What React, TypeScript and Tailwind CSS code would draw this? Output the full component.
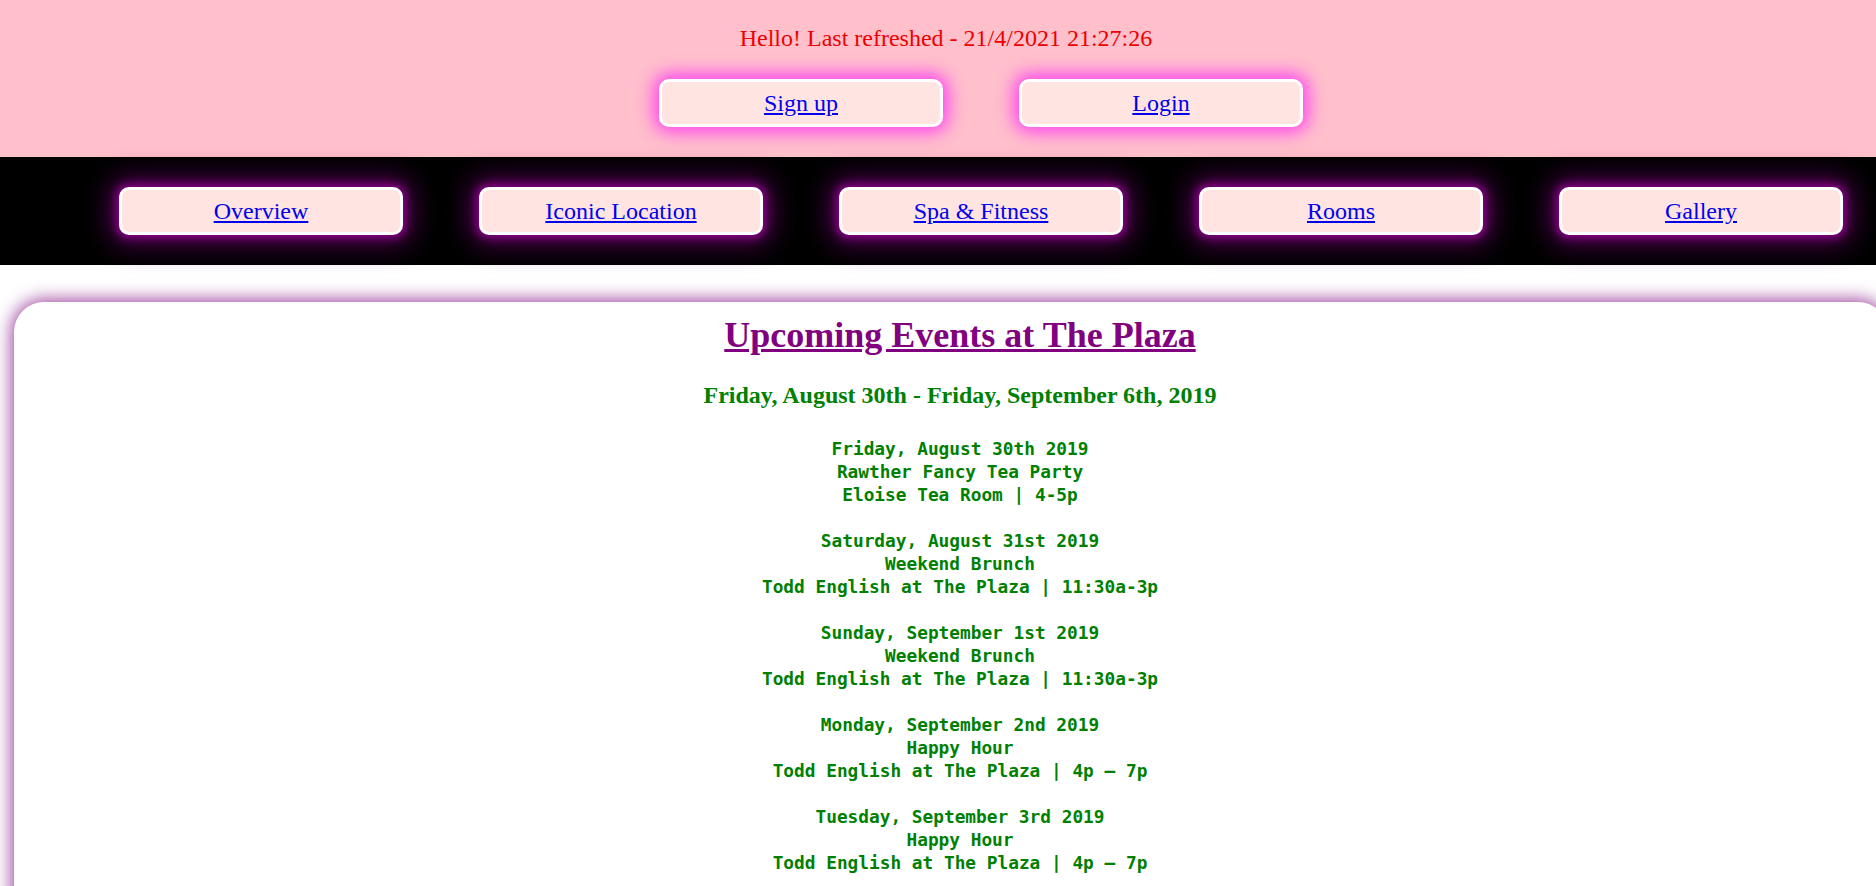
const events = [
  ["Friday, August 30th 2019", "Rawther Fancy Tea Party", "Eloise Tea Room | 4-5p"],
  ["Saturday, August 31st 2019", "Weekend Brunch", "Todd English at The Plaza | 11:30a-3p"],
  ["Sunday, September 1st 2019", "Weekend Brunch", "Todd English at The Plaza | 11:30a-3p"],
  ["Monday, September 2nd 2019", "Happy Hour", "Todd English at The Plaza | 4p \u2013 7p"],
  ["Tuesday, September 3rd 2019", "Happy Hour", "Todd English at The Plaza | 4p \u2013 7p"],
];

const navLinks = ["Overview", "Iconic Location", "Spa & Fitness", "Rooms", "Gallery"];

function GlowButton({ label, glowClass }: { label: string; glowClass: string }) {
  return (
    <a
      href="#"
      className={`flex h-[48px] w-[284px] shrink-0 items-center justify-center rounded-[10px] border-[3px] border-white bg-[#ffe4e1] text-[24px] leading-[28px] text-[#0000ee] underline ${glowClass}`}
    >
      {label}
    </a>
  );
}

export default function App() {
  return (
    <div className="h-screen overflow-hidden bg-white font-['Liberation_Serif','Times_New_Roman',serif]">
      {/* Top bar */}
      <header className="h-[157px] bg-[#ffc0cb] pt-[24px]">
        <p className="pl-[16px] text-center text-[24px] leading-[28px] text-[#ee0000]">
          Hello! Last refreshed - 21/4/2021 21:27:26
        </p>
        <div className="mt-[27px] flex justify-center gap-[76px] pl-[86px]">
          <GlowButton label="Sign up" glowClass="shadow-[0_0_18px_5px_#ff3ff0]" />
          <GlowButton label="Login" glowClass="shadow-[0_0_18px_5px_#ff3ff0]" />
        </div>
      </header>

      {/* Nav */}
      <nav className="flex h-[108px] justify-center gap-[76px] bg-black pl-[86px] pt-[30px]">
        {navLinks.map((l) => (
          <GlowButton
            key={l}
            label={l}
            glowClass="shadow-[0_0_8px_3px_#8a008a,0_0_26px_10px_#4a004a]"
          />
        ))}
      </nav>

      {/* Events card */}
      <section className="ml-[14px] mt-[37px] w-[calc(100%-2px)] rounded-[30px] bg-white pb-[300px] pl-[18px] pt-[12px] shadow-[0_0_18px_2px_#9a3d9a]">
        <h1 className="text-center text-[36px] font-bold leading-[42px] text-[#800080] underline">
          Upcoming Events at The Plaza
        </h1>
        <h3 className="mt-[25px] text-center text-[24px] font-bold leading-[28px] text-[#008000]">
          Friday, August 30th - Friday, September 6th, 2019
        </h3>
        <div className="mt-[28px] text-center font-['DejaVu_Sans_Mono','Liberation_Mono',monospace] text-[17.8px] font-bold leading-[23px] text-[#008000]">
          {events.map((e) => (
            <div key={e[0]} className="mb-[23px]">
              {e.map((line) => (
                <div key={line}>{line}</div>
              ))}
            </div>
          ))}
        </div>
      </section>
    </div>
  );
}
